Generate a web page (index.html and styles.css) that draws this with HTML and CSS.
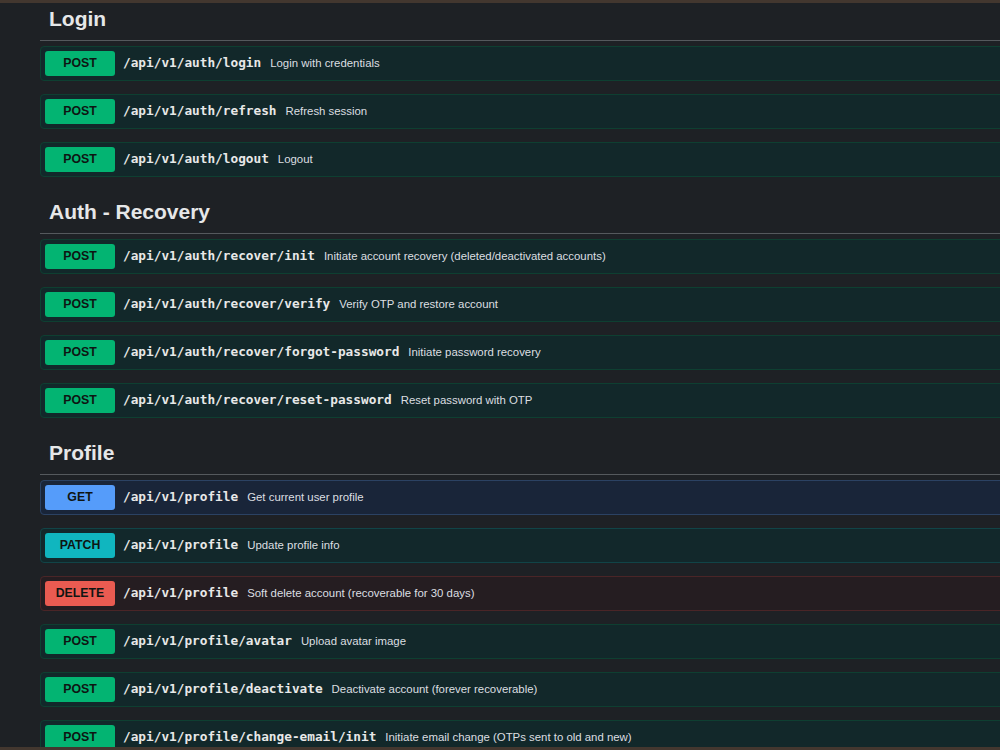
FILE: index.html
```html
<!DOCTYPE html>
<html lang="en">
<head>
<meta charset="utf-8">
<title>API</title>
<link rel="stylesheet" href="styles.css">
</head>
<body>
<div class="frame">
  <div class="content">
    <section class="group">
      <h4 class="group-title">Login</h4>
      <div class="op op-post"><span class="method m-post">POST</span><span class="path">/api/v1/auth/login</span><span class="desc">Login with credentials</span></div>
      <div class="op op-post"><span class="method m-post">POST</span><span class="path">/api/v1/auth/refresh</span><span class="desc">Refresh session</span></div>
      <div class="op op-post"><span class="method m-post">POST</span><span class="path">/api/v1/auth/logout</span><span class="desc">Logout</span></div>
    </section>
    <section class="group">
      <h4 class="group-title">Auth - Recovery</h4>
      <div class="op op-post"><span class="method m-post">POST</span><span class="path">/api/v1/auth/recover/init</span><span class="desc">Initiate account recovery (deleted/deactivated accounts)</span></div>
      <div class="op op-post"><span class="method m-post">POST</span><span class="path">/api/v1/auth/recover/verify</span><span class="desc">Verify OTP and restore account</span></div>
      <div class="op op-post"><span class="method m-post">POST</span><span class="path">/api/v1/auth/recover/forgot-password</span><span class="desc">Initiate password recovery</span></div>
      <div class="op op-post"><span class="method m-post">POST</span><span class="path">/api/v1/auth/recover/reset-password</span><span class="desc">Reset password with OTP</span></div>
    </section>
    <section class="group">
      <h4 class="group-title">Profile</h4>
      <div class="op op-get"><span class="method m-get">GET</span><span class="path">/api/v1/profile</span><span class="desc">Get current user profile</span></div>
      <div class="op op-patch"><span class="method m-patch">PATCH</span><span class="path">/api/v1/profile</span><span class="desc">Update profile info</span></div>
      <div class="op op-delete"><span class="method m-delete">DELETE</span><span class="path">/api/v1/profile</span><span class="desc">Soft delete account (recoverable for 30 days)</span></div>
      <div class="op op-post"><span class="method m-post">POST</span><span class="path">/api/v1/profile/avatar</span><span class="desc">Upload avatar image</span></div>
      <div class="op op-post"><span class="method m-post">POST</span><span class="path">/api/v1/profile/deactivate</span><span class="desc">Deactivate account (forever recoverable)</span></div>
      <div class="op op-post"><span class="method m-post">POST</span><span class="path">/api/v1/profile/change-email/init</span><span class="desc">Initiate email change (OTPs sent to old and new)</span></div>
    </section>
  </div>
</div>
</body>
</html>
```
FILE: styles.css
```css
html, body {
  margin: 0;
  padding: 0;
  background: #1e2125;
  overflow: hidden;
}
.frame {
  box-sizing: border-box;
  height: 750px;
  border-top: 3px solid #43372f;
  border-bottom: 3px solid #43372f;
  overflow: hidden;
  background: #1e2125;
}
.content {
  margin-top: -6px;
  padding-left: 40px;
  width: 1100px;
  font-family: "Liberation Sans", Arial, sans-serif;
}
.group-title {
  margin: 0 0 5px 0;
  padding: 9px 0 9px 9px;
  font-size: 21px;
  line-height: 25px;
  font-weight: bold;
  color: #e6e7e8;
  border-bottom: 1px solid #55595d;
}
.op {
  box-sizing: border-box;
  height: 35px;
  margin-bottom: 13px;
  padding: 0 4px;
  display: flex;
  align-items: center;
  border: 1px solid;
  border-radius: 4px;
}
.op-post { background: #12282a; border-color: #0e3f31; }
.op-get { background: #192539; border-color: #2b4263; }
.op-patch { background: #12282b; border-color: #114447; }
.op-delete { background: #251d21; border-color: #4a2527; }
.method {
  flex: none;
  box-sizing: border-box;
  width: 70px;
  height: 25px;
  padding-bottom: 2px;
  border-radius: 3px;
  display: flex;
  align-items: center;
  justify-content: center;
  font-size: 12.3px;
  font-weight: bold;
  color: #0e1512;
}
.m-post { background: #03b472; }
.m-get { background: #559cfa; }
.m-patch { background: #10b6bf; }
.m-delete { background: #ea5b51; }
.path {
  margin-bottom: 2px;
  padding: 0 9px 0 8px;
  font-family: "DejaVu Sans Mono", "Liberation Mono", monospace;
  font-weight: bold;
  font-size: 12.75px;
  color: #e8e8e8;
  white-space: nowrap;
}
.desc {
  margin-bottom: 2px;
  font-size: 11.4px;
  color: #dcdfe1;
  white-space: nowrap;
}
```
